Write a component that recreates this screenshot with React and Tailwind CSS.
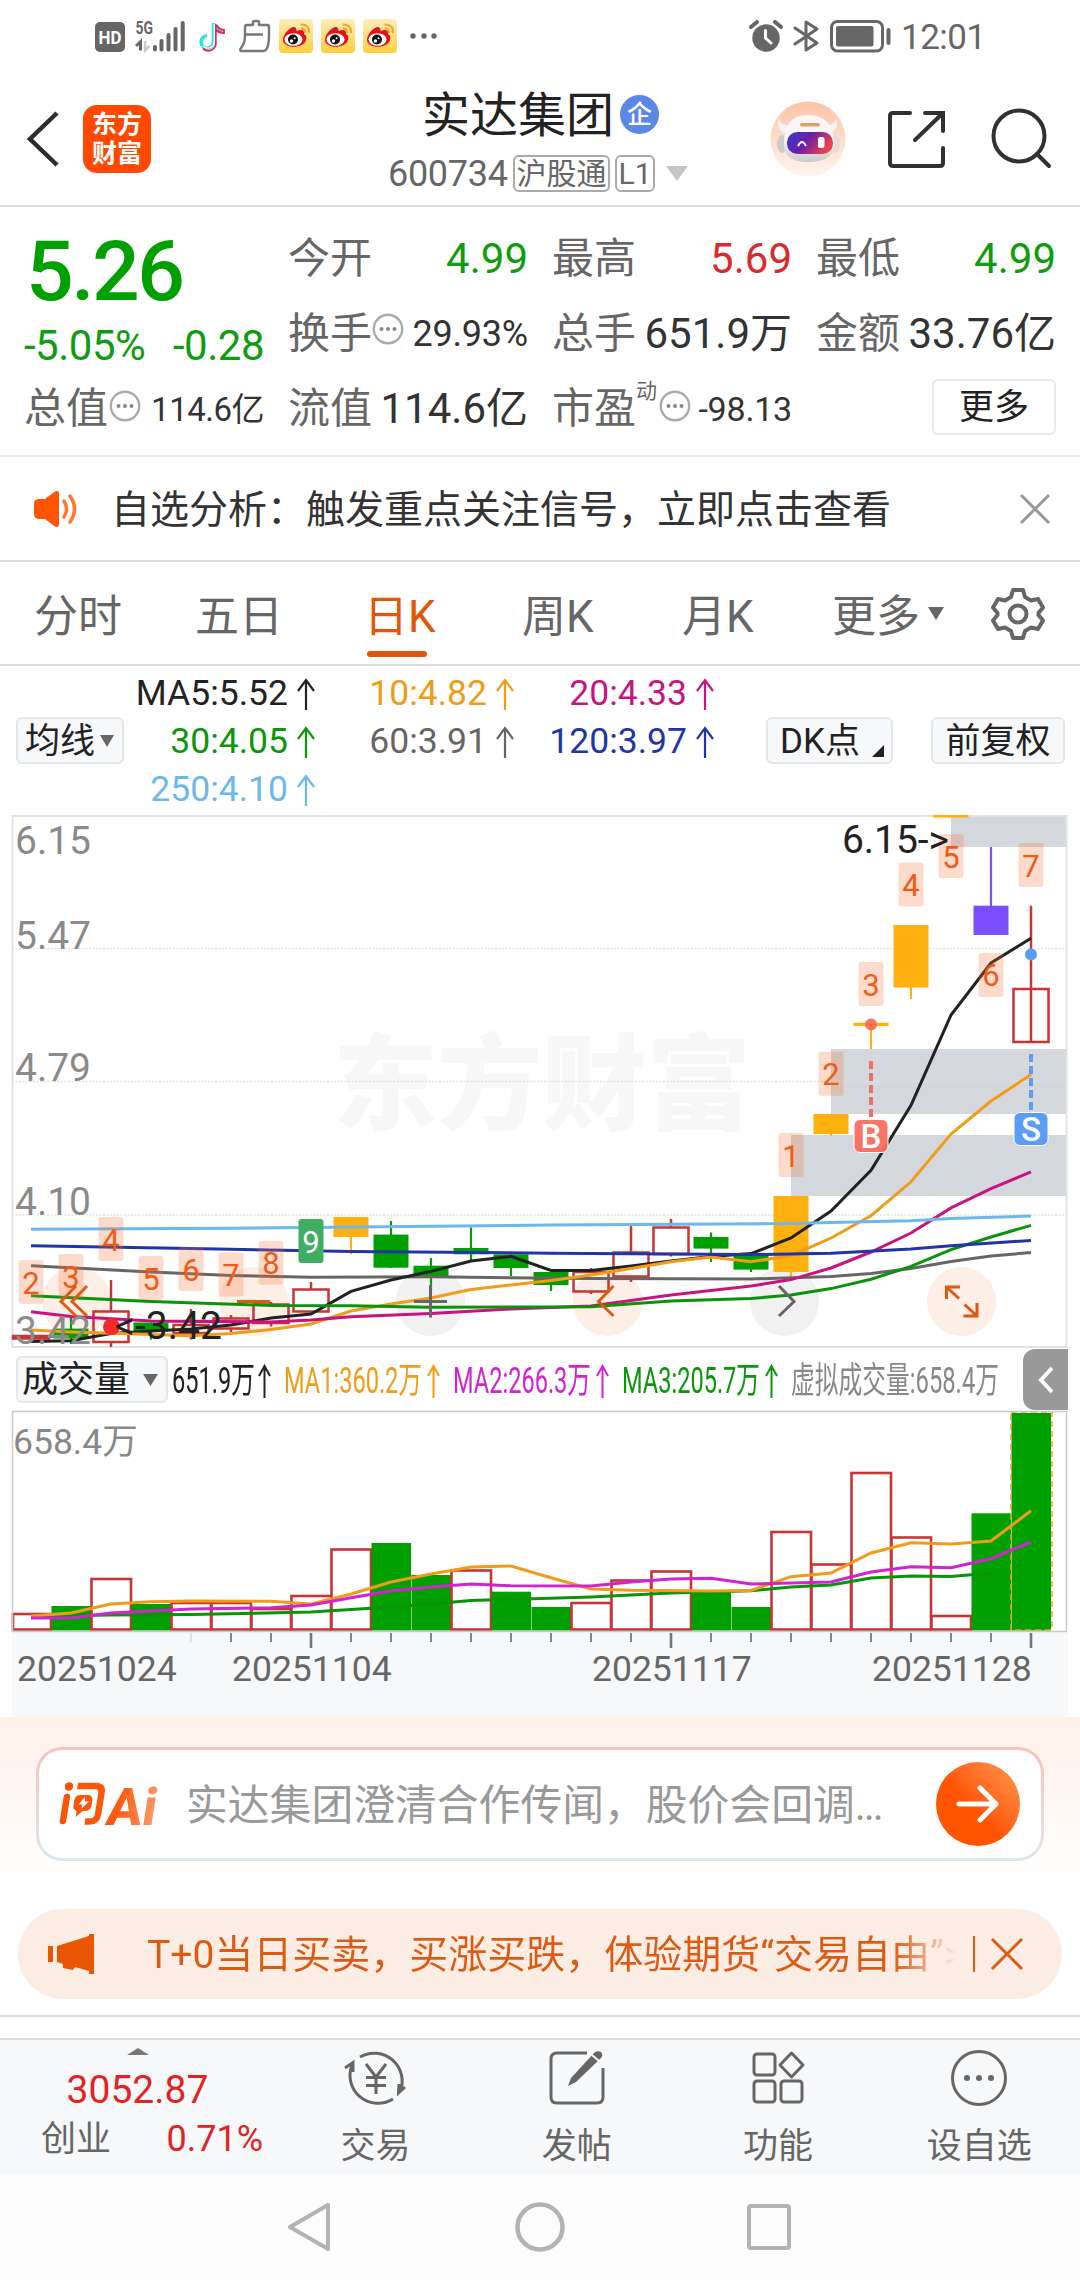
import React from 'react';

const cx = (i) => 31 + i * 40;
const toPoints = (list) => list.map(([i, y]) => `${cx(i)},${y}`).join(' ');

const RED = '#c93434';
const GREEN = '#00a000';
const GOLD = '#ffb00d';

// [index, bodyTop, bodyBottom, high, low, type]
const candles = [
  [0, 1336, 1338.5, 1336, 1338.5, 'r'],
  [1, 1328.6, 1338.6, 1318, 1344, 'g'],
  [2, 1311.5, 1342, 1280, 1347, 'r'],
  [3, 1322.5, 1331.4, 1322.5, 1339.6, 'g'],
  [4, 1325, 1333, 1309, 1339.6, 'r'],
  [5, 1318.5, 1328.5, 1315, 1332, 'r'],
  [6, 1304.5, 1323, 1302, 1326.5, 'r'],
  [7, 1289.5, 1311.5, 1282, 1312, 'r'],
  [8, 1217, 1237, 1217, 1254, 'y'],
  [9, 1234.6, 1267.7, 1221, 1268, 'g'],
  [10, 1265.7, 1276, 1258, 1290, 'g'],
  [11, 1248, 1254.3, 1227.5, 1261, 'g'],
  [12, 1254.3, 1268, 1254, 1276, 'g'],
  [13, 1272, 1285, 1272, 1291, 'g'],
  [14, 1272, 1291.5, 1268, 1294, 'r'],
  [15, 1252.5, 1276.5, 1226, 1282, 'r'],
  [16, 1227.5, 1254, 1219, 1256.5, 'r'],
  [17, 1237, 1248.6, 1232.5, 1262, 'g'],
  [18, 1253.6, 1269.6, 1253, 1272, 'g'],
  [19, 1196, 1272, 1196, 1277, 'y'],
  [20, 1114, 1134, 1114, 1136, 'y'],
  [21, 1022.8, 1026, 1023, 1049, 'y'],
  [22, 925, 987.5, 925, 999, 'y'],
  [23, 815, 817.6, 816, 817, 'y'],
  [24, 905.7, 935, 847, 935, 'p'],
  [25, 989, 1042, 905.7, 988, 'r'],
];

const maLines = [
  { color: '#666666', pts: [[0, 1265.7], [3, 1272], [5, 1275.4], [7, 1277.3], [10, 1276.8], [14, 1278.6], [18, 1279], [20, 1276.4], [21, 1273.5], [22, 1268.6], [23, 1261.4], [24, 1256], [25, 1252.5]] },
  { color: '#222222', pts: [[0, 1341.4], [1, 1340.7], [2, 1333.6], [3, 1331], [4, 1329], [5, 1325], [6, 1318], [7, 1314], [8, 1291.4], [9, 1280], [10, 1271.4], [11, 1261], [12, 1256.4], [13, 1270.4], [14, 1270.4], [15, 1266], [16, 1261], [17, 1256.4], [18, 1253.6], [19, 1238], [20, 1211], [21, 1170.4], [22, 1105.4], [23, 1015], [24, 963], [25, 938.2]] },
  { color: '#f09c18', pts: [[0, 1330], [1, 1332], [3, 1334.6], [4, 1335.7], [5, 1333.6], [6, 1329.6], [7, 1324], [8, 1311], [9, 1304], [10, 1298], [11, 1289.6], [12, 1285], [13, 1280.5], [14, 1275], [15, 1268.6], [16, 1261.8], [17, 1257], [18, 1261.8], [19, 1255.7], [20, 1238], [21, 1215.7], [22, 1181.8], [23, 1134], [24, 1101], [25, 1074.6]] },
  { color: '#c8147f', pts: [[0, 1311.8], [1, 1316.4], [3, 1321], [6, 1322], [7, 1320], [8, 1316.8], [10, 1313.6], [12, 1309], [14, 1306], [16, 1295], [18, 1286], [19, 1279.6], [20, 1268], [21, 1252], [22, 1233], [23, 1207.9], [24, 1188.6], [25, 1171.8]] },
  { color: '#0b930b', pts: [[0, 1295.7], [3, 1301.4], [6, 1305.4], [8, 1305.8], [10, 1307.2], [14, 1306.8], [16, 1301], [18, 1298.6], [19, 1295], [20, 1288.6], [21, 1279.3], [22, 1266.4], [23, 1249.6], [24, 1237], [25, 1225.4]] },
  { color: '#2135a8', pts: [[0, 1245.7], [4, 1248.6], [8, 1251.4], [13, 1253.2], [18, 1254.6], [20, 1253.2], [22, 1249], [23, 1245.7], [25, 1240.4]] },
  { color: '#6cb8ec', pts: [[0, 1229.3], [5, 1228.3], [13, 1225], [19, 1223.5], [20, 1222.4], [22, 1220.7], [23, 1218.6], [25, 1216]] },
];

// [index, top, digit]
const countTags = [
  [0, 1260, '2'], [1, 1254, '3'], [2, 1217, '4'], [3, 1256, '5'], [4, 1247, '6'], [5, 1252.5, '7'],
  [6, 1240.7, '8'], [19, 1133, '1'], [20, 1051.8, '2'], [21, 962, '3'], [22, 862.5, '4'],
  [23, 834, '5'], [24, 952.9, '6'], [25, 843, '7'],
];

const priceLabels = [['6.15', 854], ['5.47', 948.6], ['4.79', 1081.4], ['4.10', 1215], ['3.42', 1343.6]];

// [top, type]
const volumes = [
  [1614, 'r'], [1606, 'g'], [1579, 'r'], [1604, 'g'], [1603, 'r'], [1603, 'r'], [1609, 'r'], [1596, 'r'],
  [1549.5, 'r'], [1543, 'g'], [1575, 'g'], [1570.5, 'r'], [1591.7, 'g'], [1607, 'g'], [1603, 'r'],
  [1580.5, 'r'], [1571.5, 'r'], [1591.7, 'g'], [1607, 'g'], [1532, 'r'], [1564.5, 'r'], [1473, 'r'],
  [1537.5, 'r'], [1616, 'r'], [1513.3, 'g'], [1413, 'g'],
];

const volLines = [
  { color: '#0b930b', pts: [[0, 1616], [2, 1615], [4, 1614.5], [7, 1612], [9, 1607], [10, 1604], [11, 1600.5], [14, 1597], [16, 1593], [18, 1590.7], [19, 1587], [20, 1585], [21, 1578], [22, 1576], [23, 1576.5], [24, 1573]] },
  { color: '#f09c18', pts: [[0, 1616], [1, 1613], [2, 1604], [3, 1601.7], [4, 1601], [6, 1601.3], [7, 1604], [8, 1594], [9, 1582], [10, 1574], [11, 1567], [12, 1566], [13, 1577.7], [14, 1589], [15, 1590.3], [17, 1591], [18, 1590.5], [19, 1576.7], [20, 1573], [21, 1553], [22, 1542.7], [23, 1544], [24, 1541], [25, 1510.7]] },
  { color: '#d024d0', pts: [[0, 1618], [1, 1618], [2, 1613], [3, 1611], [4, 1609], [6, 1607.7], [7, 1605], [8, 1597.7], [9, 1591], [10, 1587], [11, 1584], [12, 1585.7], [14, 1586], [15, 1582], [16, 1579], [17, 1578.3], [18, 1584], [20, 1582], [21, 1572], [22, 1566.7], [23, 1567.7], [24, 1558.7], [25, 1542]] },
];

function UpArrow({ className }) {
  return (
    <svg className={className} viewBox="0 0 18 32" fill="none" stroke="currentColor" strokeWidth="2.2">
      <path d="M9 32V2M1 13L9 2L17 13" />
    </svg>
  );
}

function Dots({ className }) {
  return (
    <svg className={className} viewBox="0 0 32 32">
      <circle cx="16" cy="16" r="14.2" fill="none" stroke="#aaaaaa" strokeWidth="2.4" />
      <circle cx="9.5" cy="16" r="2" fill="#888" />
      <circle cx="16" cy="16" r="2" fill="#888" />
      <circle cx="22.5" cy="16" r="2" fill="#888" />
    </svg>
  );
}

function Weibo() {
  return (
    <svg className="h-[34px] w-[34px]" viewBox="0 0 34 34">
      <defs>
        <linearGradient id="wb" x1="0" y1="0" x2="0" y2="1">
          <stop offset="0" stopColor="#fdeebb" />
          <stop offset="1" stopColor="#fbcf3c" />
        </linearGradient>
      </defs>
      <rect width="34" height="34" rx="4" fill="url(#wb)" />
      <path d="M4 21C4 15 11 8 15 8C18 8 17 12 18 12C22 10 26 11 25 15C27 16 28 18 27 21C25 30 4 30 4 21Z" fill="#e3111b" />
      <ellipse cx="14.5" cy="20.5" rx="9" ry="6.3" fill="#fff" />
      <circle cx="14" cy="20.5" r="5" fill="#111" />
      <circle cx="12.5" cy="22" r="1.7" fill="#fff" />
      <circle cx="15.6" cy="19.3" r="1" fill="#fff" />
      <path d="M22 9.5Q26 9 26 14M21.5 5.5Q30.5 5 30 14" fill="none" stroke="#f3a32b" strokeWidth="2" />
    </svg>
  );
}

function StatusBar() {
  return (
    <div className="flex h-[73px] items-start pl-[95px] pt-[19px] text-[#666666]">
      <svg className="mt-[3px] h-[30px] w-[30px]" viewBox="0 0 30 30">
        <rect width="30" height="30" rx="5" fill="#666" />
        <text x="15" y="21.5" fontSize="18.5" fontWeight="700" fill="#fff" textAnchor="middle" textLength="23" lengthAdjust="spacingAndGlyphs">HD</text>
      </svg>
      <svg className="ml-[10px] h-[34px] w-[52px]" viewBox="0 0 52 34">
        <text x="0.5" y="15" fontSize="18" fontWeight="700" fill="#666" textLength="17.5" lengthAdjust="spacingAndGlyphs">5G</text>
        <path d="M5.5 31.5V22.5L1 27" fill="none" stroke="#666" strokeWidth="3" />
        <path d="M10 22V31.5L14.5 27" fill="none" stroke="#ccc" strokeWidth="2.5" />
        <path d="M20 28V30.5M26.5 22V30.5M33.5 16V30.5M40.5 10V30.5M47.700 4V30.5" stroke="#666" strokeWidth="4" strokeLinecap="round" />
      </svg>
      <svg className="ml-[11px] mt-[2px] h-[31px] w-[28px]" viewBox="0 0 28 31" fill="none">
        <path d="M15.500 2V21A6.200 6.200 0 1 1 9 14.800M15.500 3Q17 9 24 10" stroke="#2de3e8" strokeWidth="3.600" />
        <path d="M17.800 3V21.500A7.500 7.500 0 0 1 5 27.500M19 4Q20 8 26 9V12Q21 12 18 9" stroke="#e8235f" strokeWidth="1.800" />
        <path d="M16.300 3V21A6.500 6.500 0 0 1 5 25" stroke="#fff" strokeWidth="1.300" />
      </svg>
      <svg className="ml-[12px] h-[34px] w-[33px]" viewBox="0 0 33 34" fill="none" stroke="#777" strokeWidth="2.4" strokeLinejoin="round">
        <path d="M7 8Q7 6 9 6H15V3Q15 2 17 2H19Q21 2 21 3V6H29Q31 6 31 8V17Q31 24 29.5 28Q28.5 32 25 32H4Q1 32 3 29Q7 24 7 17ZM7 15.5H25" />
      </svg>
      <div className="ml-[8px] flex gap-[8px]">
        <Weibo />
        <Weibo />
        <Weibo />
      </div>
      <svg className="ml-[13px] mt-[14px] h-[6px] w-[30px]" viewBox="0 0 30 6" fill="#666">
        <circle cx="3" cy="3" r="2.7" />
        <circle cx="14" cy="3" r="2.7" />
        <circle cx="24" cy="3" r="2.7" />
      </svg>
      <svg className="ml-[309px] mt-px h-[32px] w-[34px]" viewBox="0 0 34 32">
        <circle cx="17" cy="18" r="13.7" fill="#666" />
        <path d="M2 7L8 2M32 7L26 2" stroke="#666" strokeWidth="4" strokeLinecap="round" />
        <path d="M16.5 10.5V18L22 23" fill="none" stroke="#fff" strokeWidth="3" strokeLinecap="round" />
      </svg>
      <svg className="ml-[10px] mt-px h-[32px] w-[26px]" viewBox="0 0 26 32" fill="none" stroke="#666" strokeWidth="3" strokeLinejoin="round" strokeLinecap="round">
        <path d="M2 8L24 23L13 30V2L24 9L2 24" />
      </svg>
      <svg className="ml-[11px] mt-px h-[33px] w-[62px]" viewBox="0 0 62 33">
        <rect x="1.5" y="1.5" width="51" height="29.5" rx="6" fill="none" stroke="#666" strokeWidth="3" />
        <rect x="6" y="6" width="37.5" height="20.5" rx="2" fill="#666" />
        <rect x="56.5" y="8" width="4" height="17" rx="2" fill="#666" />
      </svg>
      <span className="ml-[9px] mt-px text-[35px] leading-none tracking-[-0.5px]">12:01</span>
    </div>
  );
}

function Header() {
  return (
    <div className="flex h-[134px] border-b-2 border-[#dcdcdc]">
      <svg className="ml-[27px] mt-[38px] h-[56px] w-[32px]" viewBox="0 0 32 56" fill="none" stroke="#2b2d2e" strokeWidth="4.5">
        <path d="M30 2L3 28L30 54" />
      </svg>
      <div className="ml-[24px] mt-[32px] flex h-[68px] w-[68px] flex-col items-center justify-center rounded-[14px] bg-[#ff4800] text-[25px] font-bold leading-[29px] text-white">
        <span>东方</span>
        <span>财富</span>
      </div>
      <div className="ml-[237px] mt-[17px] w-[302px]">
        <div className="flex items-center pl-[34px]">
          <span className="text-[48px] leading-[52px] text-[#222222]">实达集团</span>
          <span className="mb-[3px] ml-[6px] flex h-[39px] w-[39px] items-center justify-center rounded-full bg-[#5b88e6] text-[25px] font-medium leading-none text-white">企</span>
        </div>
        <div className="mt-[13px] flex h-[37px] items-center text-[#666666]">
          <span className="w-[125px] text-[36px] leading-none tracking-[-0.3px]">600734</span>
          <span className="flex h-[37px] w-[97px] items-center justify-center rounded-[6px] border-2 border-[#aaaaaa] text-[30px] leading-none">沪股通</span>
          <span className="ml-[5px] flex h-[37px] w-[40px] items-center justify-center rounded-[6px] border-2 border-[#aaaaaa] text-[30px] leading-none">L1</span>
          <svg className="ml-[11px] h-[15px] w-[22px]" viewBox="0 0 22 15"><path d="M0 0H22L11 15Z" fill="#c6c6c6" /></svg>
        </div>
      </div>
      <svg className="ml-[80px] mt-[28px] h-[76px] w-[76px]" viewBox="0 0 76 76">
        <defs>
          <linearGradient id="botBg" x1="0" y1="0" x2="0" y2="1">
            <stop offset="0" stopColor="#fdc3a6" />
            <stop offset="1" stopColor="#fff6f0" />
          </linearGradient>
          <linearGradient id="visor" x1="0" y1="0" x2="1" y2="0.4">
            <stop offset="0" stopColor="#2b3fd0" />
            <stop offset="0.5" stopColor="#6a1fa8" />
            <stop offset="1" stopColor="#e8404f" />
          </linearGradient>
          <linearGradient id="shell" x1="0" y1="0" x2="0" y2="1">
            <stop offset="0.5" stopColor="#f8f6f8" />
            <stop offset="1" stopColor="#cdc8cd" />
          </linearGradient>
        </defs>
        <circle cx="38" cy="38" r="37.5" fill="url(#botBg)" />
        <path d="M9 17Q5 28 15 32L21 24Q10 25 9 17ZM66 17Q70 28 60 32L54 24Q65 25 66 17Z" fill="#f4f1f2" />
        <ellipse cx="12" cy="43" rx="5" ry="9" fill="#cfcacf" />
        <ellipse cx="65" cy="43" rx="5" ry="9" fill="#e2dce0" />
        <path d="M14 42Q14 14 38 14Q63 14 64 42Q65 61 38 61Q13 61 14 42Z" fill="url(#shell)" />
        <rect x="30" y="22" width="20" height="3.5" rx="1.7" fill="#e0a060" />
        <rect x="17" y="31" width="46" height="22" rx="10.5" fill="url(#visor)" />
        <path d="M28 45Q32 37 36 45" fill="none" stroke="#fff" strokeWidth="2" />
        <rect x="48" y="36" width="6.5" height="11" rx="2.5" fill="#fff" />
      </svg>
      <svg className="ml-[40px] mt-[37px] h-[60px] w-[60px]" viewBox="0 0 60 60" fill="none" stroke="#2f3132" strokeWidth="4" strokeLinecap="round">
        <path d="M24 3H7Q4 3 4 6V53Q4 56 7 56H54Q57 56 57 53V38M39 3H57V21M57 3L29 30" />
      </svg>
      <svg className="ml-[42px] mt-[34px] h-[64px] w-[64px]" viewBox="0 0 64 64" fill="none" stroke="#2f3132" strokeWidth="4" strokeLinecap="round">
        <circle cx="31" cy="29" r="25.5" />
        <path d="M49 47L61 59" />
      </svg>
    </div>
  );
}

function Quote() {
  return (
    <div className="flex h-[250px] border-b-2 border-[#ebebeb] text-[42px] leading-none text-[#333333]">
      <div className="w-[264px] pl-[24px]">
        <div className="mt-[21px] pl-[2px] text-[84px] font-medium leading-[88px] tracking-[-2.5px] text-[#00a000]">5.26</div>
        <div className="mt-[9px] flex h-[42px] items-center justify-between text-[42px] leading-none tracking-[-0.5px] text-[#109c10]">
          <span>-5.05%</span>
          <span>-0.28</span>
        </div>
        <div className="mt-[18px] flex h-[48px] items-center">
          <span className="text-[42px] text-[#666666]">总值</span>
          <Dots className="mb-[6px] ml-px h-[32px] w-[32px]" />
          <span className="ml-auto text-[33px] tracking-[-0.5px]">114.6亿</span>
        </div>
      </div>
      <div className="ml-[24px] grid w-[768px] grid-cols-[240px_240px_240px] grid-rows-[103px_75px_60px] gap-x-[24px]">
        {[['今开', '4.99', 'text-[#109c10]'], ['最高', '5.69', 'text-[#d92b2b]'], ['最低', '4.99', 'text-[#109c10]']].map(([k, v, c]) => (
          <div key={k} className="mt-[28px] flex h-[48px] items-center justify-between">
            <span className="text-[42px] text-[#666666]">{k}</span>
            <span className={c}>{v}</span>
          </div>
        ))}
        <div className="flex h-[48px] items-center text-[#666666]">
          <span className="text-[42px]">换手</span>
          <Dots className="mb-[10px] h-[32px] w-[32px]" />
          <span className="ml-auto text-[36px] tracking-[-0.2px] text-[#333333]">29.93%</span>
        </div>
        <div className="flex h-[48px] items-center justify-between">
          <span className="text-[42px] text-[#666666]">总手</span>
          <span>651.9万</span>
        </div>
        <div className="flex h-[48px] items-center justify-between">
          <span className="text-[42px] text-[#666666]">金额</span>
          <span>33.76亿</span>
        </div>
        <div className="flex h-[48px] items-center justify-between">
          <span className="text-[42px] text-[#666666]">流值</span>
          <span>114.6亿</span>
        </div>
        <div className="flex h-[48px] items-center text-[#666666]">
          <span className="text-[42px]">市盈</span>
          <span className="mb-[36px] text-[21px]">动</span>
          <Dots className="mb-[6px] ml-[2px] h-[32px] w-[32px]" />
          <span className="ml-auto text-[34px] tracking-[-0.2px] text-[#333333]">-98.13</span>
        </div>
        <div className="flex h-[56px] justify-end self-start">
          <span className="mt-[-6px] flex h-[56px] w-[124px] items-center justify-center rounded-[6px] border-2 border-[#e6e9ea] text-[35px] text-[#222222]">更多</span>
        </div>
      </div>
    </div>
  );
}

function Notice() {
  return (
    <div className="flex h-[105px] items-center border-b-2 border-[#dcdcdc]">
      <svg className="ml-[33px] h-[38px] w-[46px]" viewBox="0 0 46 38">
        <path d="M6 9H12L22 1.5Q26 0 26 4V34Q26 38 22 36.5L12 29H6Q1 29 1 24V14Q1 9 6 9Z" fill="#ff5500" />
        <path d="M31 11Q36 19 31 27M37 6Q46 19 37 32" fill="none" stroke="#ff7733" strokeWidth="3.5" strokeLinecap="round" />
      </svg>
      <span className="ml-[32px] mt-[3px] text-[39px] leading-none text-[#333333]">自选分析：触发重点关注信号，立即点击查看</span>
      <svg className="ml-auto mr-[29px] h-[32px] w-[32px]" viewBox="0 0 32 32" stroke="#999" strokeWidth="3">
        <path d="M2 2L30 30M30 2L2 30" />
      </svg>
    </div>
  );
}

function Tabs() {
  return (
    <div className="flex h-[104px] border-b-2 border-[#dcdcdc] pl-[34px] pt-[33px] text-[44px] leading-none text-[#666666]">
      <span className="w-[161px]">分时</span>
      <span className="w-[169px]">五日</span>
      <div className="w-[158px] text-[#e25608]">
        <div>日K</div>
        <div className="ml-[3px] mt-[12px] h-[6px] w-[60px] rounded-full bg-[#e25608]" />
      </div>
      <span className="w-[160px]">周K</span>
      <span className="w-[150px]">月K</span>
      <span>更多</span>
      <svg className="ml-[8px] mt-[12px] h-[13px] w-[16px]" viewBox="0 0 16 13"><path d="M0 0H16L8 13Z" fill="#666" /></svg>
      <svg className="ml-[47px] mt-[-8px] h-[54px] w-[54px]" viewBox="0 0 54 54" fill="none" stroke="#666" strokeWidth="4" strokeLinejoin="round">
        <path d="M22 3H32L34 10L40 13.5L47 12L52 20.5L47.5 26V28L52 33.5L47 42L40 40.5L34 44L32 51H22L20 44L14 40.5L7 42L2 33.5L6.5 28V26L2 20.5L7 12L14 13.5L20 10Z" />
        <circle cx="27" cy="27" r="8.5" />
      </svg>
    </div>
  );
}

const maCells = [
  ['MA5:5.52', 'text-[#222222]'], ['10:4.82', 'text-[#f09c18]'], ['20:4.33', 'text-[#c8147f]'],
  ['30:4.05', 'text-[#0b960b]'], ['60:3.91', 'text-[#666666]'], ['120:3.97', 'text-[#2135a8]'],
  ['250:4.10', 'text-[#6cb8ec]'],
];

function MaBar() {
  return (
    <div className="flex h-[149px] items-center text-[35px] leading-none">
      <div className="ml-[16px] flex h-[47px] w-[108px] items-center rounded-[6px] border-2 border-[#e4e7ea] bg-[#f7f8fa] pl-[7px] pt-px text-[#222222]">
        均线
        <svg className="ml-[5px] h-[12px] w-[14px]" viewBox="0 0 14 12"><path d="M0 0H14L7 12Z" fill="#666" /></svg>
      </div>
      <div className="mt-[2px] grid w-[591px] grid-cols-[192px_199px_200px] text-[35.5px]">
        {maCells.map(([t, c]) => (
          <div key={t} className={`flex h-[48px] items-center justify-end ${c}`}>
            <span>{t}</span>
            <UpArrow className="ml-[9px] mr-px h-[32px] w-[18px]" />
          </div>
        ))}
      </div>
      <div className="ml-[51px] flex h-[47px] w-[127px] items-center rounded-[6px] border-2 border-[#e4e7ea] bg-[#f7f8fa] pl-[12px] pt-px text-[#222222]">
        DK点
        <svg className="ml-[12px] mt-[20px] h-[12px] w-[12px]" viewBox="0 0 12 12"><path d="M12 0V12H0Z" fill="#222" /></svg>
      </div>
      <div className="ml-[38px] flex h-[47px] w-[134px] items-center justify-center rounded-[6px] border-2 border-[#e4e7ea] bg-[#f7f8fa] pt-px text-[#222222]">前复权</div>
    </div>
  );
}

function Candle({ data }) {
  const [i, top, bottom, high, low, type] = data;
  const x = cx(i);
  const color = { r: RED, g: GREEN, y: GOLD, p: '#7c4dff' }[type];
  if (type === 'r') {
    return (
      <g stroke={color} strokeWidth="2.5" fill="none">
        <path d={`M${x} ${high}V${top}M${x} ${bottom}V${low}`} />
        <rect x={i === 0 ? 13 : x - 17.5} y={top} width={i === 0 ? 36 : 35} height={bottom - top} />
      </g>
    );
  }
  return (
    <g fill={color}>
      <rect x={x - 1.1} y={high} width="2.2" height={low - high} />
      <rect x={x - 17.5} y={top} width="35" height={bottom - top} />
    </g>
  );
}

function KLine() {
  return (
    <svg className="block h-[534px] w-[1080px]" viewBox="0 815 1080 534">
      <g fill="#d4d7dc">
        <rect x="951" y="816" width="116" height="31" />
        <rect x="831" y="1049" width="236" height="65" />
        <rect x="791" y="1135" width="276" height="61" />
      </g>
      <text x="333" y="1122" fontSize="104" fontWeight="900" fill="#f7f7f7" textLength="418" lengthAdjust="spacingAndGlyphs">东方财富</text>
      <path d="M12 948.5H1067M12 1081.5H1067M12 1215H1067" stroke="#e2e2e2" strokeWidth="1.4" strokeDasharray="2 1.5" />
      <rect x="12.5" y="816" width="1054" height="531" fill="none" stroke="#e2e2e2" strokeWidth="2" />
      <g fill="#fdeee6">
        <circle cx="76.5" cy="1301.5" r="34.5" />
        <circle cx="253.5" cy="1301.5" r="34.5" />
        <circle cx="607.5" cy="1301.5" r="34.5" />
        <circle cx="961.5" cy="1301.5" r="34.5" />
      </g>
      <g fill="#f1f1f1">
        <circle cx="430.5" cy="1301.5" r="34.5" />
        <circle cx="784.5" cy="1301.5" r="34.5" />
      </g>
      {candles.map((c) => <Candle key={c[0]} data={c} />)}
      {maLines.map((l) => (
        <polyline key={l.color} points={toPoints(l.pts)} fill="none" stroke={l.color} strokeWidth="3" />
      ))}
      {countTags.map(([i, y, n]) => (
        <g key={i}>
          <rect x={cx(i) - 12.5} y={y} width="25" height="44" rx="3" fill="#f4743b" fillOpacity="0.26" />
          <text x={cx(i)} y={y + 33.5} fontSize="31" fill="#f05a14" textAnchor="middle">{n}</text>
        </g>
      ))}
      <rect x="298.5" y="1219" width="25" height="44" rx="3" fill="#3fae63" />
      <text x="311" y="1252.5" fontSize="31" fill="#fff" textAnchor="middle">9</text>
      <g fill="none" stroke="#dc5a12" strokeWidth="3">
        <path d="M76 1286L61 1301.5L76 1316M87 1286L72 1301.5L87 1316" />
        <path d="M237 1301.5H270" />
        <path d="M613.5 1286L598.5 1301.5L613.5 1316" />
        <path d="M946.5 1299V1287H960M947 1287.5L959 1298.5M977 1303V1316H963.5M976.5 1315.5L964.5 1304.5" />
      </g>
      <g fill="none" stroke="#666" strokeWidth="3">
        <path d="M414 1301.5H447M430.5 1285V1317.5" />
        <path d="M779 1286L794 1301.5L779 1316" />
      </g>
      {priceLabels.map(([t, y]) => (
        <text key={t} x="15" y={y} fontSize="39" fill="#8a8a8a">{t}</text>
      ))}
      <circle cx="111.5" cy="1326.8" r="8.5" fill="#f22a2a" />
      <text x="115" y="1338.5" fontSize="39" fill="#222" textLength="107">&lt;-3.42</text>
      <text x="842" y="852.5" fontSize="39" fill="#222" textLength="107">6.15-&gt;</text>
      <path d="M871 1061V1118" stroke="#ef6f62" strokeWidth="4" strokeDasharray="8 4" />
      <circle cx="871" cy="1024.5" r="6" fill="#f8664e" fillOpacity="0.9" />
      <rect x="854" y="1119.5" width="34" height="33" rx="6" fill="#f86f5f" fillOpacity="0.95" stroke="#fff" strokeWidth="1" />
      <text x="871" y="1147.5" fontSize="33" fontWeight="500" fill="#fff" textAnchor="middle">B</text>
      <path d="M1031 1054V1111" stroke="#5b9cf5" strokeWidth="4" strokeDasharray="8 4" />
      <circle cx="1031" cy="954.5" r="6" fill="#5b9cf5" />
      <rect x="1014" y="1112.5" width="34" height="33" rx="6" fill="#5b9cf8" stroke="#fff" strokeWidth="1" />
      <text x="1031" y="1140.5" fontSize="33" fontWeight="500" fill="#fff" textAnchor="middle">S</text>
    </svg>
  );
}

const volCells = [
  ['651.9万', 'text-[#222222]', 'w-[86px]'],
  ['MA1:360.2万', 'text-[#f09c18]', 'w-[143px]'],
  ['MA2:266.3万', 'text-[#d024d0]', 'w-[143px]'],
  ['MA3:205.7万', 'text-[#0b960b]', 'w-[143px]'],
];

function VolumeBar() {
  return (
    <div className="flex h-[61px] items-center text-[36px] leading-none">
      <div className="ml-[16px] flex h-[47px] w-[152px] shrink-0 items-center rounded-[6px] border-2 border-[#e4e7ea] bg-[#f7f8fa] pl-[4px] pt-px text-[#222222]">
        成交量
        <svg className="ml-[13px] h-[12px] w-[15px]" viewBox="0 0 15 12"><path d="M0 0H15L7.5 12Z" fill="#666" /></svg>
      </div>
      <div className="ml-[4px] mt-[3px] flex w-[619px] shrink-0 items-center gap-[13px]">
        {volCells.map(([t, c, w]) => (
          <div key={t} className={`flex items-center ${c}`}>
            <div className={w}>
              <span className="inline-block origin-left scale-x-[0.655] whitespace-nowrap">{t}</span>
            </div>
            <svg className="h-[34px] w-[13px] shrink-0" viewBox="0 0 13 34" fill="none" stroke="currentColor" strokeWidth="2">
              <path d="M6.5 34V2M1 12L6.5 2L12 12" />
            </svg>
          </div>
        ))}
      </div>
      <div className="mt-[2px] w-[232px] text-[#888888]">
        <span className="inline-block origin-left scale-x-[0.66] whitespace-nowrap">虚拟成交量:658.4万</span>
      </div>
      <div className="flex h-[61px] w-[45px] shrink-0 items-center justify-center rounded-l-[12px] bg-[#999999]">
        <svg className="h-[28px] w-[18px]" viewBox="0 0 18 28" fill="none" stroke="#fff" strokeWidth="4"><path d="M15 2L4 14L15 26" /></svg>
      </div>
    </div>
  );
}

function VolumeChart() {
  return (
    <svg className="block h-[307px] w-[1080px]" viewBox="0 1410 1080 307">
      <rect x="12" y="1632" width="1056" height="85" fill="#f7f8fa" />
      {volumes.map(([y, t], i) =>
        t === 'g' ? (
          <rect key={i} x={cx(i) - 19.5} y={y} width="39.5" height={1630.5 - y} fill={GREEN} />
        ) : (
          <rect key={i} x={i === 0 ? 13 : cx(i) - 19.5} y={y} width={i === 0 ? 38 : 39.5} height={1629.5 - y} fill="#fff" stroke={RED} strokeWidth="2.6" />
        )
      )}
      <rect x="1011" y="1412" width="41" height="218" fill="none" stroke="#f0a020" strokeWidth="1.5" strokeDasharray="6 4" />
      {volLines.map((l) => (
        <polyline key={l.color} points={toPoints(l.pts)} fill="none" stroke={l.color} strokeWidth="3" />
      ))}
      <rect x="12.5" y="1411.5" width="1054" height="220" fill="none" stroke="#c9c9c9" strokeWidth="1.5" />
      <text x="13" y="1453.5" fontSize="35.5" fill="#888">658.4万</text>
      {volumes.map((_, i) => {
        if (i < 4) return null;
        const major = i === 7 || i === 16 || i === 25;
        return <path key={i} d={`M${cx(i)} 1633V${major ? 1648 : 1642}`} stroke={i === 4 ? '#ddd' : '#777'} strokeWidth={major ? 2.6 : 1.8} />;
      })}
      <g fontSize="35.5" fill="#666">
        <text x="17" y="1681">20251024</text>
        <text x="232" y="1681">20251104</text>
        <text x="592" y="1681">20251117</text>
        <text x="872" y="1681">20251128</text>
      </g>
    </svg>
  );
}

function AskAi() {
  return (
    <div className="h-[192px] bg-linear-to-b from-[#fff0ea] to-white to-90% px-[36px] pt-[30px]">
      <div className="h-[114px] rounded-[26px] bg-linear-to-b from-[#f8c3b8] to-[#dee6f3] p-[3px]">
        <div className="flex h-[108px] items-center rounded-[23px] bg-white">
          <svg className="ml-[17px] h-[52px] w-[106px]" viewBox="0 0 106 52">
            <defs>
              <linearGradient id="ai" gradientUnits="userSpaceOnUse" x1="0" y1="0" x2="104" y2="0">
                <stop offset="0" stopColor="#fa5200" />
                <stop offset="0.6" stopColor="#fb5a10" />
                <stop offset="1" stopColor="#fb9a68" />
              </linearGradient>
            </defs>
            <g transform="translate(3 -1) skewX(-9)" fill="url(#ai)" stroke="url(#ai)">
              <path d="M11 20V44" fill="none" strokeWidth="6.5" strokeLinecap="round" />
              <circle cx="11.500" cy="9.500" r="4.200" stroke="none" />
              <path d="M20 9H38Q45 9 45 16V37Q45 44.500 38 44.500H33" fill="none" strokeWidth="6.500" />
              <rect x="19" y="18" width="18" height="16" rx="5" stroke="none" />
              <path d="M23 32V40L30 33Z" stroke="none" />
              <path d="M29 20L24 27.500H28L27 32L34 24.500H30Z" fill="#fff" stroke="none" />
              <text x="53" y="47.5" fontSize="52" fontWeight="800" stroke="none" textLength="50" lengthAdjust="spacingAndGlyphs">Ai</text>
            </g>
          </svg>
          <span className="ml-[24px] mt-[4px] w-[721px] text-[41.8px] leading-none text-[#999999]">实达集团澄清合作传闻，股价会回调<span className="tracking-[-2px]">...</span></span>
          <div className="ml-[29px] flex h-[84px] w-[84px] items-center justify-center rounded-full bg-linear-to-tr from-[#ff5400] from-45% to-[#ff9848]">
            <svg className="h-[38px] w-[44px]" viewBox="0 0 44 38" fill="none" stroke="#fff" strokeWidth="5" strokeLinecap="round" strokeLinejoin="round">
              <path d="M3 19H40M24 3L40 19L24 35" />
            </svg>
          </div>
        </div>
      </div>
    </div>
  );
}

function Promo() {
  return (
    <div className="h-[108px] border-b-2 border-[#dcdcdc] px-[18px]">
      <div className="flex h-[90px] items-center rounded-full bg-[#fcede4]">
        <svg className="ml-[30px] h-[40px] w-[46px]" viewBox="0 0 46 40" fill="#ea5504">
          <path d="M0 12H5V28H0ZM9 12L41 2V0H46V40H41V37L27 33L25 36L15 34V30L9 28Z" />
        </svg>
        <div className="ml-[53px] mt-[2px] w-[810px] overflow-hidden whitespace-nowrap bg-linear-to-r from-[#dc5a12] from-92% to-transparent bg-clip-text text-[39px] leading-[46px] text-transparent">
          T+0当日买卖，买涨买跌，体验期货“交易自由”&gt;&gt;
        </div>
        <div className="ml-[16px] h-[36px] w-[2px] bg-[#dc5a12]" />
        <svg className="ml-[15px] h-[34px] w-[34px]" viewBox="0 0 34 34" stroke="#dc5a12" strokeWidth="3">
          <path d="M2 2L32 32M32 2L2 32" />
        </svg>
      </div>
    </div>
  );
}

function BottomNav() {
  return (
    <div className="mt-[21px] flex h-[136px] border-t-2 border-[#dcdcdc] bg-[#f7f8fa] text-[35px] leading-none text-[#666666]">
      <div className="w-[275px]">
        <svg className="ml-[127px] mt-[8px] h-[7px] w-[22px]" viewBox="0 0 22 7"><path d="M0 7L11 0L22 7Z" fill="#777" /></svg>
        <div className="mt-[15px] text-center text-[39px] leading-[40px] text-[#e02424]">3052.87</div>
        <div className="mt-[11px] flex items-center justify-between pl-[41px] pr-[12px]">
          <span>创业</span>
          <span className="text-[36px] text-[#e02424]">0.71%</span>
        </div>
      </div>
      <div className="grid w-[805px] grid-cols-4">
        <div className="flex flex-col items-center">
          <svg className="mt-[8px] h-[60px] w-[66px]" viewBox="0 0 66 60" fill="none" stroke="#666" strokeWidth="3">
            <path d="M17 9A28 28 0 0 1 57 44M62 39L55.5 45L56 36M50 51A28 28 0 0 1 9 17M2 20L10 14.5V24" />
            <path d="M23 16L33 29L43 16M23 29.5H43M23 37.5H43M33 29V46" />
          </svg>
          <span className="mt-[21px]">交易</span>
        </div>
        <div className="flex flex-col items-center">
          <svg className="mt-[8px] h-[60px] w-[58px]" viewBox="0 0 58 60" fill="none" stroke="#666" strokeWidth="3">
            <path d="M39 5H9Q3 5 3 11V49Q3 55 9 55H49Q55 55 55 49V20" />
            <path d="M20 38L23 30L46 5Q49 2 53 4Q55.5 7 53 10L28 34Z" fill="#666" stroke="none" />
            <path d="M44 7L51 13" stroke="#f7f8fa" strokeWidth="2" />
          </svg>
          <span className="mt-[21px]">发帖</span>
        </div>
        <div className="flex flex-col items-center">
          <svg className="mt-[8px] h-[60px] w-[56px]" viewBox="0 0 56 60" fill="none" stroke="#666" strokeWidth="3" strokeLinejoin="round">
            <rect x="4" y="6" width="21" height="21" rx="3" />
            <rect x="4" y="33" width="21" height="21" rx="3" />
            <rect x="31" y="33" width="21" height="21" rx="3" />
            <path d="M41.5 5L53 17L41.5 29L30 17Z" />
          </svg>
          <span className="mt-[21px]">功能</span>
        </div>
        <div className="flex flex-col items-center">
          <svg className="mt-[8px] h-[60px] w-[60px]" viewBox="0 0 60 60" fill="#666">
            <circle cx="30" cy="30" r="26.5" fill="none" stroke="#666" strokeWidth="3" />
            <circle cx="18" cy="30" r="3" />
            <circle cx="30" cy="30" r="3" />
            <circle cx="42" cy="30" r="3" />
          </svg>
          <span className="mt-[21px]">设自选</span>
        </div>
      </div>
    </div>
  );
}

function SystemNav() {
  return (
    <div className="flex h-[106px] bg-[#fcfcfc] pt-[26px]">
      <svg className="ml-[286px] h-[54px] w-[46px]" viewBox="0 0 46 54" fill="none" stroke="#b3b3b3" strokeWidth="4" strokeLinejoin="round">
        <path d="M42 5V49L4 27Z" />
      </svg>
      <svg className="ml-[181px] h-[54px] w-[54px]" viewBox="0 0 54 54" fill="none" stroke="#b3b3b3" strokeWidth="4.5">
        <circle cx="27" cy="27" r="22.5" />
      </svg>
      <svg className="ml-[178px] h-[54px] w-[48px]" viewBox="0 0 48 54" fill="none" stroke="#b3b3b3" strokeWidth="4">
        <rect x="4" y="6" width="40" height="42" rx="2" />
      </svg>
    </div>
  );
}

export default function App() {
  return (
    <div className="h-[2280px] w-[1080px] overflow-hidden bg-white font-['Roboto','Noto_Sans_CJK_SC',sans-serif]">
      <StatusBar />
      <Header />
      <Quote />
      <Notice />
      <Tabs />
      <MaBar />
      <KLine />
      <VolumeBar />
      <VolumeChart />
      <AskAi />
      <Promo />
      <BottomNav />
      <SystemNav />
    </div>
  );
}
